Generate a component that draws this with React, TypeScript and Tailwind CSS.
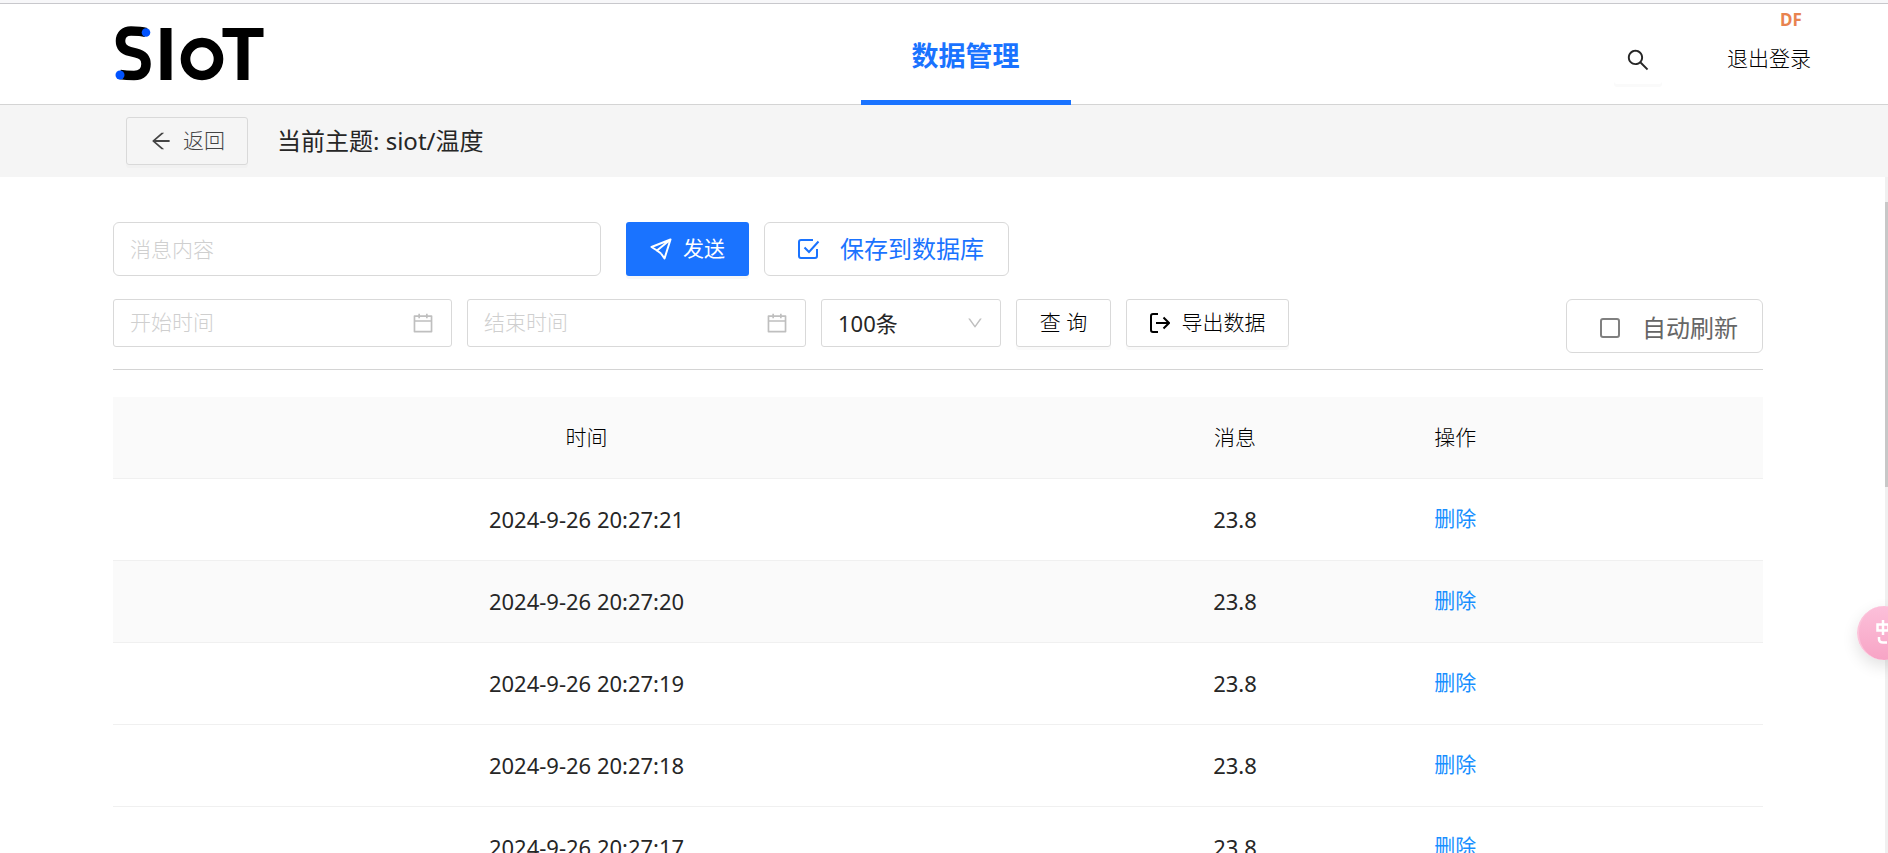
import { AiOutlineArrowLeft, AiOutlineCalendar, AiOutlineDown, AiOutlineSearch } from "react-icons/ai";

const rows = [
  { time: "2024-9-26 20:27:21", value: "23.8" },
  { time: "2024-9-26 20:27:20", value: "23.8", active: true },
  { time: "2024-9-26 20:27:19", value: "23.8" },
  { time: "2024-9-26 20:27:18", value: "23.8" },
  { time: "2024-9-26 20:27:17", value: "23.8" },
];

function Logo() {
  return (
    <svg width="150" height="56" viewBox="0 0 150 56" role="img" aria-label="SIoT">
      <path d="M31 6.5C26 5 21 5 16 5C9.500 5 5.500 9 5.500 15C5.500 21 9 24 15 25.500L21 27C27 28.500 31 31 31 38C31 45 27 49.500 19 49.500C14 49.500 10 49.300 5 48.500" fill="none" stroke="#000" strokeWidth="9.500" />
      <circle cx="31" cy="6.500" r="4.300" fill="#0052ff" />
      <circle cx="5" cy="49" r="4.500" fill="#0052ff" />
      <rect x="45.500" y="2" width="11" height="52" />
      <circle cx="87" cy="33" r="16.500" fill="none" stroke="#000" strokeWidth="9.600" />
      <path d="M107.500 2h41v9h-15v43h-11V11h-15z" />
    </svg>
  );
}

function SendIcon() {
  return (
    <svg width="22" height="22" viewBox="0 0 22 22" fill="none" stroke="currentColor" strokeWidth="2" strokeLinejoin="round" aria-hidden="true">
      <path d="M20.500 1.500L1.500 9l5.500 3.500L20.500 1.500L14.500 20.500L11 15.500" />
      <path d="M7 12.500L11 15.500" />
    </svg>
  );
}

function ExportIcon() {
  return (
    <svg width="20" height="20" viewBox="0 0 20 20" fill="none" stroke="#000" strokeWidth="2" aria-hidden="true">
      <path d="M8 1H3Q1 1 1 3V17Q1 19 3 19H8" />
      <path d="M6 10H18.500M13.500 4.500L19 10L13.500 15.500" />
    </svg>
  );
}

function CheckedIcon() {
  return (
    <svg width="22" height="20" viewBox="0 0 22 20" fill="none" stroke="currentColor" strokeWidth="2" aria-hidden="true">
      <path d="M15 1H3Q1 1 1 3V17Q1 19 3 19H17Q19 19 19 17V10" />
      <path d="M6.500 8.500L11 13L20.500 2.500" />
    </svg>
  );
}

function DateField({ label }: { label: string }) {
  return (
    <label className="flex h-12 w-[339px] items-center rounded-[3px] border border-[#d9d9d9] px-4">
      <input
        type="text"
        aria-label={label}
        placeholder={label}
        className="min-w-0 flex-1 bg-transparent text-[21px] font-light outline-none placeholder:text-[#cfcfcf]"
      />
      <AiOutlineCalendar className="size-6 text-[#bfbfbf]" aria-hidden="true" />
    </label>
  );
}

export default function App() {
  return (
    <div className="flex h-screen flex-col overflow-hidden bg-white font-['Noto_Sans','Noto_Sans_CJK_SC',sans-serif] text-[21px] text-[#262626]">
      <header className="shrink-0 border-b border-[#d4d4d4]">
        <div className="h-1 border-b border-[#c8c8cc] bg-[#f7f7f9]" />
        <div className="flex h-[100px] items-stretch justify-between pr-[77px] pl-[115px]">
          <a href="#" className="flex w-[310px] items-center">
            <Logo />
          </a>
          <nav className="-mb-px flex">
            <a href="#" className="flex w-[210px] justify-center border-b-5 border-[#1a73ff] pt-8 text-[27px] leading-10 font-bold text-[#1a73ff]">
              数据管理
            </a>
          </nav>
          <div className="flex w-[305px] items-start justify-end gap-[65px] pt-1">
            <button type="button" aria-label="搜索" className="mt-7 flex size-12 items-center justify-center rounded-[3px] shadow-[0_3px_0_#fafafa]">
              <AiOutlineSearch className="size-[26px]" />
            </button>
            <div className="flex flex-col items-center">
              <span className="ml-11 text-[17px] leading-6 font-bold text-[#e8834f]">DF</span>
              <button type="button" className="mt-[10px] leading-8 font-light text-black">退出登录</button>
            </div>
          </div>
        </div>
      </header>

      <div className="flex h-[72px] shrink-0 items-center gap-[29px] bg-[#f5f5f5] pl-[126px]">
        <button type="button" className="flex h-12 w-[122px] items-center justify-center gap-[10px] rounded-[3px] border border-[#d9d9d9] font-light text-[#444] shadow-[0_3px_0_#f1f1f1]">
          <AiOutlineArrowLeft className="size-6" />
          返回
        </button>
        <h1 className="text-2xl">当前主题: siot/温度</h1>
      </div>

      <div className="flex min-h-0 flex-1">
        <main className="min-w-0 flex-1 overflow-hidden pt-[45px] pr-[122px] pl-[113px]">
          <div className="flex items-center">
            <input
              type="text"
              aria-label="消息内容"
              placeholder="消息内容"
              className="mr-[25px] h-[54px] w-[488px] rounded-md border border-[#d9d9d9] px-4 font-light outline-none placeholder:text-[#cfcfcf]"
            />
            <button type="button" className="mr-[15px] flex h-[54px] w-[123px] items-center justify-center gap-[11px] rounded-[3px] bg-[#1a73ff] text-white shadow-[0_3px_0_#f7f7f7]">
              <SendIcon />
              发送
            </button>
            <label className="flex h-[54px] w-[245px] items-center gap-5 rounded-md border border-[#d9d9d9] pl-[33px] text-2xl text-[#1a73ff]">
              <input type="checkbox" defaultChecked className="sr-only" />
              <CheckedIcon />
              保存到数据库
            </label>
          </div>

          <div className="mt-[23px] flex items-start gap-[15px] border-b border-[#d4d4d4] pb-4">
            <DateField label="开始时间" />
            <DateField label="结束时间" />
            <label className="relative flex h-12 w-[180px] items-center rounded-[3px] border border-[#d9d9d9]">
              <select aria-label="条数" className="h-full w-full appearance-none bg-transparent px-4 text-[22px] outline-none">
                <option>100条</option>
              </select>
              <AiOutlineDown className="pointer-events-none absolute right-4 size-[18px] text-[#bfbfbf]" aria-hidden="true" />
            </label>
            <button type="button" className="h-12 w-[95px] rounded-[3px] border border-[#d9d9d9] font-light text-black shadow-[0_3px_0_#fafafa]">
              查 询
            </button>
            <button type="button" className="flex h-12 w-[163px] items-center justify-center gap-3 rounded-[3px] border border-[#d9d9d9] font-light text-black shadow-[0_3px_0_#fafafa]">
              <ExportIcon />
              导出数据
            </button>
            <label className="ml-auto flex h-[54px] w-[197px] items-center gap-[22px] rounded-md border border-[#d9d9d9] pt-1 pl-[33px] text-2xl text-[#666]">
              <input type="checkbox" className="size-5 appearance-none rounded-[3px] border-2 border-[#808080]" />
              自动刷新
            </label>
          </div>

          <table className="mt-[27px] w-full table-fixed text-center">
            <thead>
              <tr className="h-[81px] border-b border-[#f0f0f0] bg-[#fafafa] text-black">
                <th className="w-[57.400%] font-light">时间</th>
                <th className="w-[21.200%] font-light">消息</th>
                <th className="w-[5.500%] font-light">操作</th>
                <td />
              </tr>
            </thead>
            <tbody>
              {rows.map((row) => (
                <tr key={row.time} className={row.active ? "h-[82px] border-b border-[#f0f0f0] bg-[#fafafa]" : "h-[82px] border-b border-[#f0f0f0]"}>
                  <td className="text-[22px]">{row.time}</td>
                  <td className="text-[22px]">{row.value}</td>
                  <td>
                    <a href="#" className="text-[#1890ff]">删除</a>
                  </td>
                  <td />
                </tr>
              ))}
            </tbody>
          </table>
        </main>
        <div className="w-[3px] shrink-0 bg-[#f0f0f0] pt-[25px]">
          <div className="h-[285px] bg-[#c8c8c8]" />
        </div>
      </div>

      <button type="button" aria-label="中" className="fixed top-[606px] -right-[23px] flex size-[54px] items-center rounded-full border-l-2 border-[#fbc4da] bg-linear-to-b from-[#fcc0da] to-[#f7a4c5] pl-[17px] shadow-[0_6px_16px_rgba(0,0,0,0.12)]">
        <svg width="24" height="26" viewBox="0 0 24 26" fill="none" stroke="#fff" strokeWidth="2.500" aria-hidden="true">
          <path d="M1.500 4.500H12.500V10.500H1.500ZM7 0V15" />
          <path d="M3 17V19Q3 22.500 7 22.500H11" />
        </svg>
      </button>
    </div>
  );
}
